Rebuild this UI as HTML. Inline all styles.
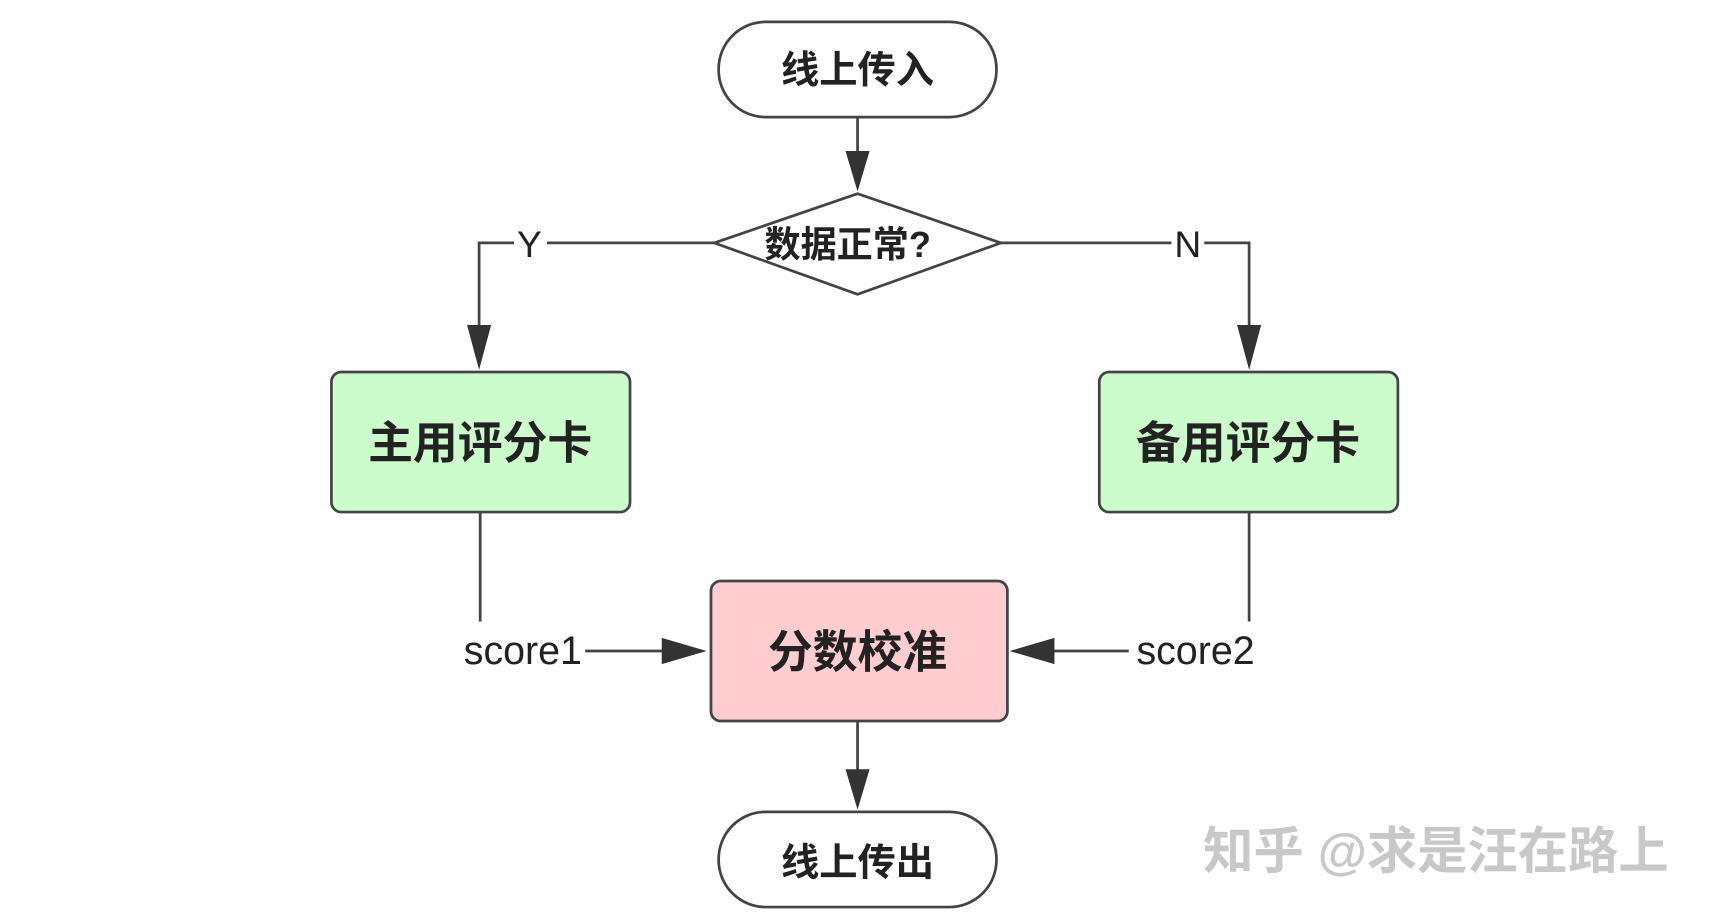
<!DOCTYPE html>
<html><head><meta charset="utf-8"><style>html,body{margin:0;padding:0;background:#fff;overflow:hidden}</style></head><body>
<svg width="1714" height="918" viewBox="0 0 1567 839" preserveAspectRatio="none" xmlns="http://www.w3.org/2000/svg" style="display:block">
<g font-family="'Liberation Sans','Noto Sans CJK SC',sans-serif" fill="#222">
<g stroke="#444" stroke-width="2.5" fill="none">
<rect x="657" y="20" width="254" height="87" rx="43" fill="#fff"/>
<line x1="784" y1="107" x2="784" y2="145"/>
<polygon points="653,222 784,177 915,222 784,269" fill="#fff"/>
<polyline points="653,222 438,222 438,300"/>
<polyline points="915,222 1142,222 1142,300"/>
<rect x="303" y="340" width="273" height="128" rx="9" fill="#ccfccb"/>
<rect x="1005" y="340" width="273" height="128" rx="9" fill="#ccfccb"/>
<line x1="439" y1="468" x2="439" y2="568"/>
<line x1="1142" y1="468" x2="1142" y2="568"/>
<line x1="535" y1="595" x2="610" y2="595"/>
<line x1="960" y1="595" x2="1032" y2="595"/>
<rect x="650" y="531" width="271" height="128" rx="9" fill="#ffcdd0"/>
<line x1="784" y1="659" x2="784" y2="705"/>
<rect x="657" y="742" width="254" height="87" rx="43" fill="#fff"/>
</g>
<g fill="#333">
<polygon points="773,138 795,138 784,175"/>
<polygon points="427,297 449,297 438,338"/>
<polygon points="1131,297 1153,297 1142,338"/>
<polygon points="605,583 605,607 646,595"/>
<polygon points="964,583 964,607 923,595"/>
<polygon points="773,703 795,703 784,740"/>
</g>
<rect x="470" y="205" width="30" height="34" fill="#fff"/>
<rect x="1071" y="205" width="30" height="34" fill="#fff"/>
<text x="484" y="235" font-size="34" text-anchor="middle">Y</text>
<text x="1086" y="235" font-size="34" text-anchor="middle">N</text>
<g font-weight="bold" text-anchor="middle">
<text x="784" y="76" font-size="35">线上传入</text>
<text x="775" y="235" font-size="33">数据正常?</text>
<text x="439" y="419" font-size="41">主用评分卡</text>
<text x="1141" y="419" font-size="41">备用评分卡</text>
<text x="784" y="610" font-size="41">分数校准</text>
<text x="784" y="800" font-size="35">线上传出</text>
</g>
<text x="478" y="607" font-size="36" text-anchor="middle">score1</text>
<text x="1093" y="607" font-size="36" text-anchor="middle">score2</text>
<text x="1100" y="794" font-size="46" fill="#c8c8c8" font-weight="bold">知乎 @求是汪在路上</text>
</g>
</svg>
</body></html>
